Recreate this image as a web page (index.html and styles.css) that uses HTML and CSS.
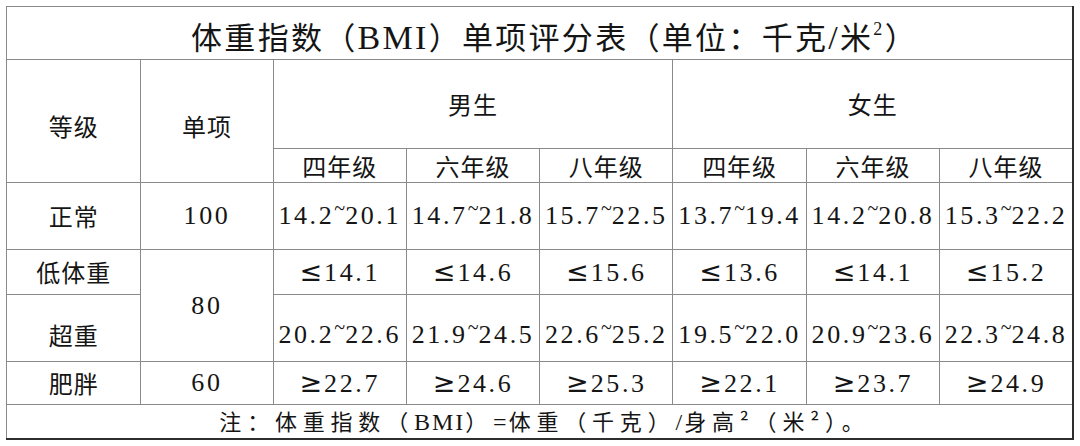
FILE: index.html
```html
<!DOCTYPE html>
<html lang="zh-CN">
<head>
<meta charset="utf-8">
<title>体重指数（BMI）单项评分表</title>
<link rel="stylesheet" href="styles.css">
</head>
<body>
<table class="bmi">
  <colgroup>
    <col class="c-a"><col class="c-b">
    <col class="c-d"><col class="c-d"><col class="c-d">
    <col class="c-d"><col class="c-d"><col class="c-d">
  </colgroup>
  <tr class="r-title">
    <td colspan="8" class="title">体重指数（<span class="lat">BMI</span>）单项评分表（单位：千克<span class="lat">/</span>米<sup class="sq">2</sup>）</td>
  </tr>
  <tr class="r-h1">
    <td rowspan="2" class="cjk lower">等级</td>
    <td rowspan="2" class="cjk lower">单项</td>
    <td colspan="3" class="cjk">男生</td>
    <td colspan="3" class="cjk">女生</td>
  </tr>
  <tr class="r-h2">
    <td class="cjk">四年级</td><td class="cjk">六年级</td><td class="cjk">八年级</td>
    <td class="cjk">四年级</td><td class="cjk">六年级</td><td class="cjk">八年级</td>
  </tr>
  <tr class="r-normal">
    <td class="cjk">正常</td>
    <td class="num">100</td>
    <td class="num">14.2<span class="tl">~</span>20.1</td>
    <td class="num">14.7<span class="tl">~</span>21.8</td>
    <td class="num">15.7<span class="tl">~</span>22.5</td>
    <td class="num">13.7<span class="tl">~</span>19.4</td>
    <td class="num">14.2<span class="tl">~</span>20.8</td>
    <td class="num">15.3<span class="tl">~</span>22.2</td>
  </tr>
  <tr class="r-low">
    <td class="cjk">低体重</td>
    <td rowspan="2" class="num">80</td>
    <td class="num"><span class="op">≤</span>14.1</td>
    <td class="num"><span class="op">≤</span>14.6</td>
    <td class="num"><span class="op">≤</span>15.6</td>
    <td class="num"><span class="op">≤</span>13.6</td>
    <td class="num"><span class="op">≤</span>14.1</td>
    <td class="num"><span class="op">≤</span>15.2</td>
  </tr>
  <tr class="r-over">
    <td class="cjk">超重</td>
    <td class="num">20.2<span class="tl">~</span>22.6</td>
    <td class="num">21.9<span class="tl">~</span>24.5</td>
    <td class="num">22.6<span class="tl">~</span>25.2</td>
    <td class="num">19.5<span class="tl">~</span>22.0</td>
    <td class="num">20.9<span class="tl">~</span>23.6</td>
    <td class="num">22.3<span class="tl">~</span>24.8</td>
  </tr>
  <tr class="r-fat">
    <td class="cjk">肥胖</td>
    <td class="num">60</td>
    <td class="num"><span class="op">≥</span>22.7</td>
    <td class="num"><span class="op">≥</span>24.6</td>
    <td class="num"><span class="op">≥</span>25.3</td>
    <td class="num"><span class="op">≥</span>22.1</td>
    <td class="num"><span class="op">≥</span>23.7</td>
    <td class="num"><span class="op">≥</span>24.9</td>
  </tr>
  <tr class="r-note">
    <td colspan="8" class="note">注：体重指数（<span class="lat">BMI</span>）<span class="lat">=</span>体重（千克）<span class="lat">/</span>身高²（米²）。</td>
  </tr>
</table>
</body>
</html>
```
FILE: styles.css
```css
html, body {
  margin: 0;
  padding: 0;
  background: #ffffff;
}

body {
  padding: 6px 0 0 6px;
  font-family: "Noto Sans CJK SC", "Liberation Serif", serif;
  color: #151515;
}

.bmi {
  border-collapse: collapse;
  table-layout: fixed;
  width: 1068px;
  border-top: 1px solid #9a9a9a;
  border-left: 1px solid #8a8a8a;
  border-right: 2px solid #2e2e2e;
  border-bottom: 2px solid #2e2e2e;
}

.c-a { width: 134px; }
.c-b { width: 132px; }
.c-d { width: 133px; }

.bmi td {
  border: 1px solid #8a8a8a;
  padding: 0;
  text-align: center;
  vertical-align: middle;
  line-height: 1;
  white-space: nowrap;
  overflow: hidden;
}

.r-title { height: 53px; }
.r-h1 { height: 89px; }
.r-h2 { height: 34px; }
.r-normal { height: 67px; }
.r-low { height: 45px; }
.r-over { height: 67px; }
.r-fat { height: 43px; }
.r-note { height: 34px; }

.title {
  font-family: "Noto Sans CJK SC", sans-serif;
  font-size: 31px;
  font-weight: 400;
  padding-top: 9px !important;
  padding-left: 30px !important;
  letter-spacing: 2.3px;
}

.lat {
  font-family: "Liberation Serif", serif;
}

.title .lat {
  font-size: 34px;
}

.sq {
  font-family: "Liberation Serif", serif;
  font-size: 18px;
  vertical-align: 14px;
  line-height: 0;
}

.cjk {
  font-family: "Noto Sans CJK SC", sans-serif;
  font-size: 24px;
  font-weight: 400;
  letter-spacing: 1px;
}

.lower {
  padding-top: 10px !important;
}

.num {
  font-family: "Liberation Serif", serif;
  font-size: 26px;
  letter-spacing: 2.6px;
}

.tl {
  vertical-align: 9px;
  font-size: 20px;
  letter-spacing: 0;
  line-height: 0;
}

.op {
  font-family: "DejaVu Sans", sans-serif;
  font-size: 27px;
  letter-spacing: 2px;
}

.r-over td {
  padding-top: 14px;
}

.note {
  font-family: "Noto Sans CJK SC", sans-serif;
  font-size: 22px;
  letter-spacing: 5.8px;
  padding-left: 10px !important;
}

.note .lat {
  font-size: 24px;
  letter-spacing: 2px;
}
```
